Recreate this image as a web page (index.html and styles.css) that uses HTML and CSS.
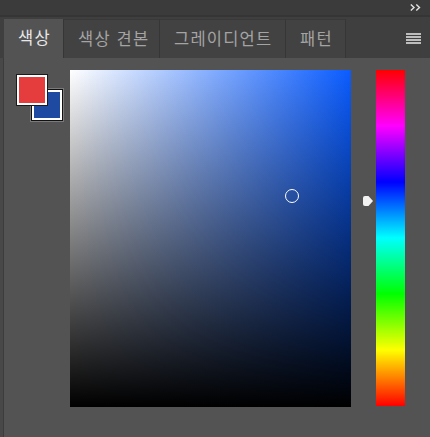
FILE: index.html
```html
<!DOCTYPE html>
<html lang="ko">
<head>
    <meta charset="UTF-8">
    <link rel="stylesheet" href="styles.css">
</head>
<body>

    <div class="topbar">
        <svg class="collapse" width="11" height="7" viewBox="0 0 11 7">
            <path d="M0.8 0.5 L4 3.5 L0.8 6.5" fill="none" stroke="#e2e2e2" stroke-width="1.4"/>
            <path d="M6.3 0.5 L9.5 3.5 L6.3 6.5" fill="none" stroke="#e2e2e2" stroke-width="1.4"/>
        </svg>
    </div>

    <div class="tabs">
        <div class="tab active">색상</div>
        <div class="tab swatch-tab">색상 견본</div>
        <div class="tab gradient-tab">그레이디언트</div>
        <div class="tab pattern-tab">패턴</div>
        <div class="tab-fill">
            <svg class="menu" width="15" height="11" viewBox="0 0 15 11">
                <rect x="0" y="0" width="15" height="2" fill="#bdbdbd"/>
                <rect x="0" y="3" width="15" height="2" fill="#bdbdbd"/>
                <rect x="0" y="6" width="15" height="2" fill="#bdbdbd"/>
                <rect x="0" y="9" width="15" height="2" fill="#bdbdbd"/>
            </svg>
        </div>
    </div>

    <div class="panel">
        <div class="swatches">
            <div class="swatch bg-swatch"></div>
            <div class="swatch fg-swatch"></div>
        </div>

        <div class="field">
            <div class="picker"></div>
        </div>

        <div class="hue-wrap">
            <div class="hue-arrow"></div>
            <div class="hue"></div>
        </div>
    </div>

</body>
</html>
```

FILE: styles.css
```css
body {
    margin: 0;
    background-color: #484848;
    font-family: "Noto Sans CJK KR", "Noto Sans", sans-serif;
    width: 430px;
    height: 437px;
    overflow: hidden;
}

.topbar {
    height: 15px;
    background-color: #3b3b3b;
    border-bottom: 2px solid #353535;
    display: flex;
    justify-content: flex-end;
    align-items: flex-start;
}

.collapse {
    margin: 4px 9px 0 0;
}

.tabs {
    display: flex;
    height: 41px;
    background-color: #3f3f3f;
    padding-left: 4px;
}

.tab {
    box-sizing: border-box;
    display: flex;
    align-items: center;
    padding: 0 0 3px 14px;
    margin-top: 2px;
    font-size: 16.5px;
    letter-spacing: 1.2px;
    color: #a4a4a4;
    background-color: #424242;
    border-left: 1px solid #363636;
    border-top: 1px solid #393939;
}

.tab.active {
    width: 59px;
    background-color: #535353;
    color: #e8e8e8;
    border-left: none;
    border-top: none;
}

.swatch-tab { width: 96px; }
.gradient-tab { width: 126px; }
.pattern-tab { width: 60px; }

.tab-fill {
    flex: 1;
    display: flex;
    justify-content: flex-end;
    align-items: center;
    border-left: 1px solid #363636;
    margin-top: 2px;
    padding-right: 9px;
}

.menu {
    margin-top: 0;
}

.panel {
    display: flex;
    margin-left: 3px;
    border-left: 1px solid #3c3c3c;
    background-color: #535353;
    height: 380px;
    padding: 12px 0 0 13px;
}

.swatches {
    position: relative;
    width: 53px;
    height: 60px;
}

.swatch {
    position: absolute;
    box-sizing: border-box;
    border: 2px solid #fff;
}

.fg-swatch {
    left: 0;
    top: 5px;
    width: 30px;
    height: 30px;
    background-color: #e53d3d;
    box-shadow: 0 0 0 1px #1a1a1a;
}

.bg-swatch {
    left: 15px;
    top: 20px;
    width: 30px;
    height: 30px;
    background-color: #1f4aa1;
    box-shadow: 0 0 0 1px #111, 0 0 0 2px #7a7a7a;
}

.field {
    position: relative;
    width: 281px;
    height: 337px;
    background:
        linear-gradient(to top, #000, rgba(0, 0, 0, 0)),
        linear-gradient(to right, #fff, hsl(220, 100%, 52%));
}

.picker {
    position: absolute;
    left: 215px;
    top: 119px;
    width: 14px;
    height: 14px;
    box-sizing: border-box;
    border: 1.5px solid #fff;
    border-radius: 50%;
}

.hue-wrap {
    position: relative;
    margin-left: 25px;
}

.hue {
    width: 29px;
    height: 336px;
    background: linear-gradient(to bottom,
        #ff0000 0%,
        #ff00ff 16.67%,
        #0000ff 33.33%,
        #00ffff 50%,
        #00ff00 66.67%,
        #ffff00 83.33%,
        #ff0000 100%);
}

.hue-arrow {
    position: absolute;
    left: -13px;
    top: 126px;
    width: 10px;
    height: 10px;
    background-color: #f2f2f2;
    clip-path: polygon(0 0, 55% 0, 100% 50%, 55% 100%, 0 100%);
    border-radius: 2px;
}
```
